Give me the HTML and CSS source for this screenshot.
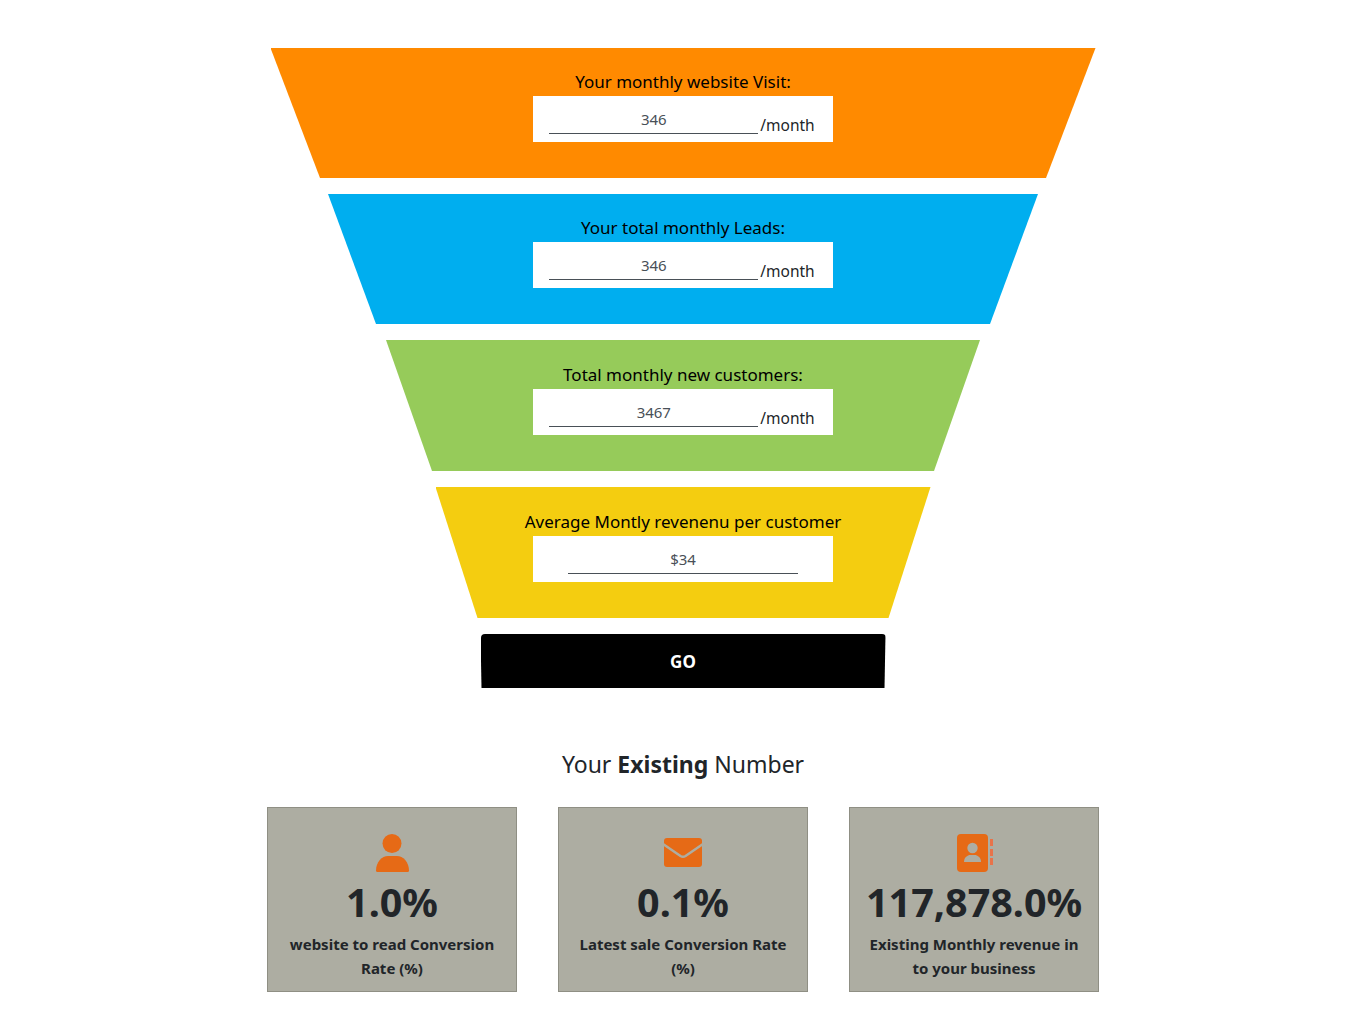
FILE: index.html
```html
<!DOCTYPE html>
<html lang="en">

<head>
    <meta charset="UTF-8">
    <meta name="viewport" content="width=device-width, initial-scale=1.0">
    <title>Funnel</title>
    <link rel="stylesheet" href="styles.css">
</head>

<body>
    <section class="funnel">
        <div class="step step-orange">
            <label class="step-label">Your monthly website Visit:</label>
            <div class="field">
                <input class="field-input" type="text" value="346">
                <span class="field-unit">/month</span>
            </div>
        </div>
        <div class="step step-blue">
            <label class="step-label">Your total monthly Leads:</label>
            <div class="field">
                <input class="field-input" type="text" value="346">
                <span class="field-unit">/month</span>
            </div>
        </div>
        <div class="step step-green">
            <label class="step-label">Total monthly new customers:</label>
            <div class="field">
                <input class="field-input" type="text" value="3467">
                <span class="field-unit">/month</span>
            </div>
        </div>
        <div class="step step-yellow">
            <label class="step-label">Average Montly revenenu per customer</label>
            <div class="field">
                <input class="field-input field-input-wide" type="text" value="$34">
            </div>
        </div>
        <button class="go-button">GO</button>
    </section>

    <h2 class="numbers-title">Your <strong>Existing</strong> Number</h2>

    <section class="cards">
        <div class="card">
            <svg class="card-icon" width="38" height="38" viewBox="0 0 38 38">
                <circle cx="19" cy="9.5" r="9.5" />
                <path d="M4.5 38 a1.5 1.5 0 0 1 -1.5 -1.5 C3 28 9 22 15 22 H24 C30 22 36 28 36 36.5 a1.5 1.5 0 0 1 -1.5 1.5 Z" />
            </svg>
            <div class="card-value">1.0%</div>
            <p class="card-label">website to read Conversion Rate (%)</p>
        </div>
        <div class="card">
            <svg class="card-icon" width="38" height="38" viewBox="0 0 38 38">
                <rect x="0" y="4" width="38" height="29" rx="3" />
                <path class="icon-cut" d="M-1 10 L16.5 22 Q19 23.6 21.5 22 L39 10" />
            </svg>
            <div class="card-value">0.1%</div>
            <p class="card-label">Latest sale Conversion Rate (%)</p>
        </div>
        <div class="card">
            <svg class="card-icon" width="38" height="38" viewBox="0 0 38 38">
                <rect x="2" y="0" width="31" height="38" rx="4" />
                <rect class="icon-tab" x="35" y="5" width="3" height="7" />
                <rect class="icon-tab" x="35" y="15" width="3" height="7" />
                <rect class="icon-tab" x="35" y="24" width="3" height="7" />
                <circle class="icon-hole" cx="17.5" cy="14" r="5.2" />
                <path class="icon-hole" d="M9 28 C9 23 13 21 15 21 H20 C22 21 26 23 26 28 Z" />
            </svg>
            <div class="card-value">117,878.0%</div>
            <p class="card-label">Existing Monthly revenue in to your business</p>
        </div>
    </section>
</body>

</html>
```

FILE: styles.css
```css
/* General */
body {
    margin: 0;
    padding: 48px 0 37px;
    background-color: #fff;
    color: #212529;
    font-family: 'Noto Sans', 'Open Sans', Arial, sans-serif;
}

/* Funnel */
.funnel {
    display: flex;
    flex-direction: column;
    align-items: center;
    gap: 16px;
}

.step {
    box-sizing: border-box;
    height: 130px;
    padding-top: 21px;
    display: flex;
    flex-direction: column;
    align-items: center;
    color: #000;
}

.step-orange {
    width: 825px;
    background-color: #ff8a00;
    clip-path: polygon(0 0, 100% 0, calc(100% - 49.5px) 100%, 49.5px 100%);
}

.step-blue {
    width: 710px;
    background-color: #00aeef;
    clip-path: polygon(0 0, 100% 0, calc(100% - 48px) 100%, 48px 100%);
}

.step-green {
    width: 594px;
    height: 131px;
    padding-top: 22px;
    background-color: #96cb5a;
    clip-path: polygon(0 0, 100% 0, calc(100% - 46px) 100%, 46px 100%);
}

.step-yellow {
    width: 495px;
    height: 131px;
    padding-top: 22px;
    background-color: #f4cd10;
    clip-path: polygon(0 0, 100% 0, calc(100% - 42px) 100%, 42px 100%);
}

.step-label {
    margin-bottom: 2px;
    font-size: 17px;
    line-height: 25px;
    white-space: nowrap;
}

.field {
    box-sizing: border-box;
    width: 300px;
    height: 46px;
    padding-bottom: 8px;
    background-color: #fff;
    display: flex;
    justify-content: center;
    align-items: flex-end;
}

.field-input {
    box-sizing: border-box;
    width: 209px;
    height: 30px;
    padding: 0;
    border: none;
    border-bottom: 1px solid #495057;
    background: none;
    outline: none;
    color: #495057;
    font-family: inherit;
    font-size: 15px;
    text-align: center;
}

.field-input-wide {
    width: 230px;
}

.field-unit {
    margin: 0 2px;
    font-size: 15.5px;
    line-height: 18px;
    color: #212529;
}

.go-button {
    width: 405px;
    height: 54px;
    border: none;
    border-radius: 4px 4px 0 0;
    background-color: #000;
    clip-path: polygon(0 0, 100% 0, calc(100% - 1px) 100%, 1px 100%);
    color: #fff;
    font-family: inherit;
    font-size: 17px;
    font-weight: 700;
}

/* Existing numbers */
.numbers-title {
    margin: 61px 0 28px;
    font-size: 23px;
    font-weight: 400;
    line-height: 30px;
    text-align: center;
}

.cards {
    display: flex;
    justify-content: center;
    gap: 41px;
}

.card {
    box-sizing: border-box;
    width: 250px;
    height: 185px;
    padding: 26px 16px 0;
    border: 1px solid #8f8f84;
    background-color: #adada2;
    text-align: center;
}

.card-icon {
    display: block;
    margin: 0 auto;
    fill: #e66a16;
    overflow: visible;
}

.icon-cut {
    fill: none;
    stroke: #adada2;
    stroke-width: 2.5;
}

.icon-tab {
    fill: #e8734a;
}

.icon-hole {
    fill: #adada2;
}

.card-value {
    margin-top: 4px;
    font-size: 39.5px;
    font-weight: 700;
    line-height: 52px;
}

.card-label {
    margin: 4px 0 0;
    font-size: 15px;
    font-weight: 700;
    line-height: 24px;
}
```
